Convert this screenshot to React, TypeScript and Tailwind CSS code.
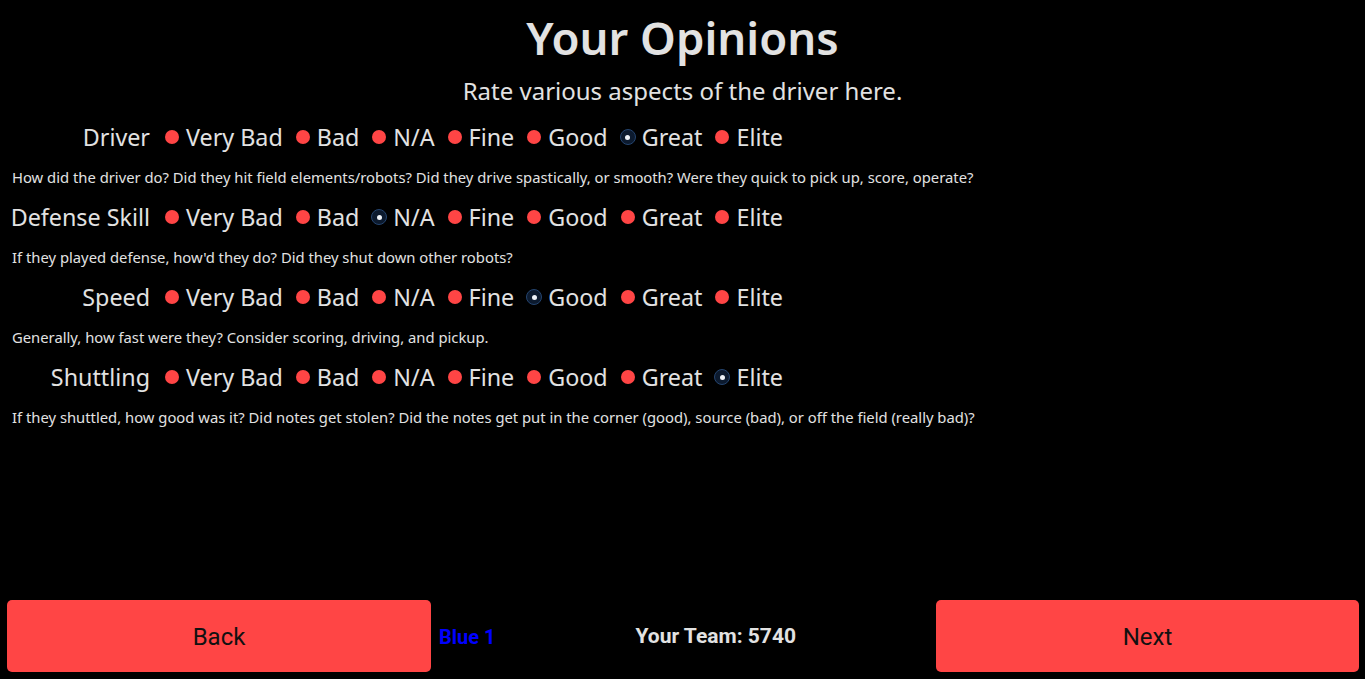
import { useState } from 'react';

const OPTIONS = ['Very Bad', 'Bad', 'N/A', 'Fine', 'Good', 'Great', 'Elite'];

const QUESTIONS = [
  {
    label: 'Driver',
    help: 'How did the driver do? Did they hit field elements/robots? Did they drive spastically, or smooth? Were they quick to pick up, score, operate?',
    initial: 'Great',
  },
  {
    label: 'Defense Skill',
    help: "If they played defense, how'd they do? Did they shut down other robots?",
    initial: 'N/A',
  },
  {
    label: 'Speed',
    help: 'Generally, how fast were they? Consider scoring, driving, and pickup.',
    initial: 'Good',
  },
  {
    label: 'Shuttling',
    help: 'If they shuttled, how good was it? Did notes get stolen? Did the notes get put in the corner (good), source (bad), or off the field (really bad)?',
    initial: 'Elite',
  },
];

function Radio({ checked }: { checked: boolean }) {
  if (checked) {
    return (
      <span className="flex h-[16px] w-[16px] items-center justify-center rounded-full border-[1.5px] border-[#24446e] bg-[#0c1a2e]">
        <span className="h-[5px] w-[5px] rounded-full bg-[#eef2f7]" />
      </span>
    );
  }
  return <span className="mx-[1px] h-[14px] w-[14px] rounded-full bg-[#ff4545]" />;
}

function RatingRow({ label, help, initial }: { label: string; help: string; initial: string }) {
  const [value, setValue] = useState(initial);

  return (
    <div className="mb-[14px]">
      <div className="flex h-8 items-center text-[23.3px] leading-8">
        <div className="w-[150px] text-right">{label}</div>
        <div className="ml-[14px] flex items-center">
          {OPTIONS.map((opt, i) => (
            <label
              key={opt}
              onClick={() => setValue(opt)}
              className={`flex cursor-pointer items-center ${i > 0 ? 'ml-[12px]' : ''}`}
            >
              <Radio checked={value === opt} />
              <span className="ml-[6px]">{opt}</span>
            </label>
          ))}
        </div>
      </div>
      <p className="mt-[14px] pl-3 text-[14.8px] leading-5">{help}</p>
    </div>
  );
}

export default function App() {
  return (
    <div
      className="flex h-[679px] flex-col bg-black text-[#e2e2e2]"
      style={{ fontFamily: "'Noto Sans', 'Open Sans', sans-serif" }}
    >
      <h1 className="pt-[9px] text-center text-[45.5px] font-semibold leading-[56px]">Your Opinions</h1>
      <p className="mt-[10px] text-center text-[24px] leading-8">Rate various aspects of the driver here.</p>

      <div className="mt-[14px]">
        {QUESTIONS.map((q) => (
          <RatingRow key={q.label} {...q} />
        ))}
      </div>

      <div
        className="mt-auto mb-[7px] flex items-center gap-2 pl-[7px] pr-[6px]"
        style={{ fontFamily: "Roboto, 'Liberation Sans', sans-serif" }}
      >
        <button className="h-[72px] w-[424px] rounded-[5px] bg-[#ff4545] pt-[2px] text-[24px] text-[#111]">Back</button>
        <span className="pt-[2px] text-[20px] font-bold text-[#0000ff]">Blue 1</span>
        <span className="flex-1 pt-[2px] text-center text-[21px] font-bold text-[#e2e2e2]">Your Team: 5740</span>
        <button className="h-[72px] w-[423px] rounded-[5px] bg-[#ff4545] pt-[2px] text-[24px] text-[#111]">Next</button>
      </div>
    </div>
  );
}
